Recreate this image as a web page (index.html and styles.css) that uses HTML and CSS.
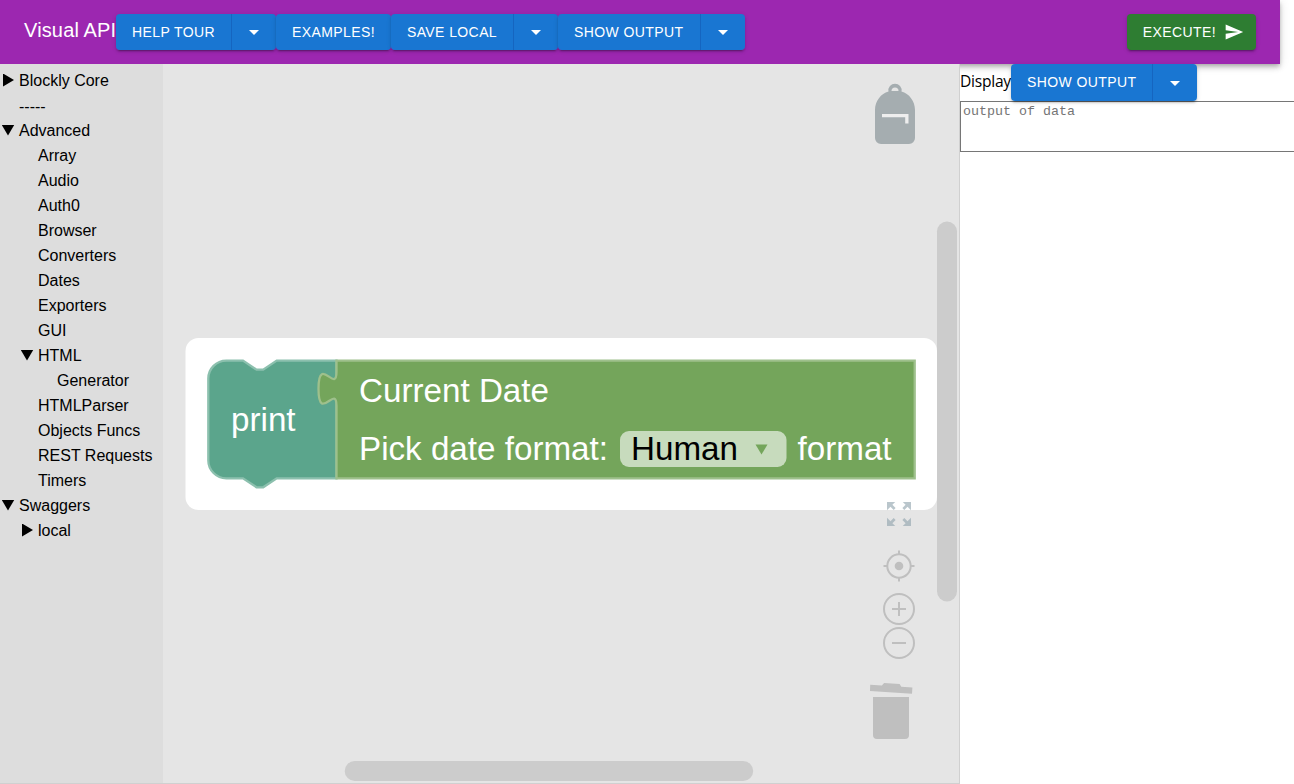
FILE: index.html
```html
<!DOCTYPE html>
<html lang="en">
<head>
<meta charset="utf-8">
<title>Visual API</title>
<link rel="stylesheet" href="styles.css">
</head>
<body>
<header class="appbar">
  <h1 class="brand">Visual API</h1>
  <div class="group">
    <button class="btn">HELP TOUR</button>
    <button class="btn caret"><svg width="24" height="24" viewBox="0 0 24 24"><path d="m7 10 5 5 5-5z"/></svg></button>
  </div>
  <div class="group"><button class="btn">EXAMPLES!</button></div>
  <div class="group">
    <button class="btn">SAVE LOCAL</button>
    <button class="btn caret"><svg width="24" height="24" viewBox="0 0 24 24"><path d="m7 10 5 5 5-5z"/></svg></button>
  </div>
  <div class="group wide">
    <button class="btn">SHOW OUTPUT</button>
    <button class="btn caret"><svg width="24" height="24" viewBox="0 0 24 24"><path d="m7 10 5 5 5-5z"/></svg></button>
  </div>
  <button class="btn execute">EXECUTE!<svg width="20" height="20" viewBox="0 0 24 24"><path d="M2.01 21 23 12 2.01 3 2 10l15 2-15 2z"/></svg></button>
</header>
<main class="main">
  <section class="blockly">
    <nav class="toolbox">
      <div class="row"><i class="arrow closed"></i>Blockly Core</div>
      <div class="row sep"><i class="arrow"></i>-----</div>
      <div class="row"><i class="arrow open"></i>Advanced</div>
      <div class="row l1"><i class="arrow"></i>Array</div>
      <div class="row l1"><i class="arrow"></i>Audio</div>
      <div class="row l1"><i class="arrow"></i>Auth0</div>
      <div class="row l1"><i class="arrow"></i>Browser</div>
      <div class="row l1"><i class="arrow"></i>Converters</div>
      <div class="row l1"><i class="arrow"></i>Dates</div>
      <div class="row l1"><i class="arrow"></i>Exporters</div>
      <div class="row l1"><i class="arrow"></i>GUI</div>
      <div class="row l1"><i class="arrow open"></i>HTML</div>
      <div class="row l2"><i class="arrow"></i>Generator</div>
      <div class="row l1"><i class="arrow"></i>HTMLParser</div>
      <div class="row l1"><i class="arrow"></i>Objects Funcs</div>
      <div class="row l1"><i class="arrow"></i>REST Requests</div>
      <div class="row l1"><i class="arrow"></i>Timers</div>
      <div class="row"><i class="arrow open"></i>Swaggers</div>
      <div class="row l1"><i class="arrow closed"></i>local</div>
    </nav>
    <svg class="workspace" width="796" height="719" viewBox="163 64 796 719">
      <rect class="hole" x="185.500" y="338" width="751.500" height="172" rx="13"/>
      <g class="block">
        <path class="print" d="M208.300 378.600a18 18 0 0 1 18-18H243l13.500 9h6.700l13.500-9H336.500V478.300H276.700l-13.500 9h-6.700l-13.500-9H226.300a18 18 0 0 1-18-18z"/>
        <path class="date" d="M336.500 360.600H914.700V478.300H336.500V405.800c0-22.600-18 18-18-17s18 5.600 18-17z"/>
        <text x="231" y="431">print</text>
        <text x="359" y="402">Current Date</text>
        <text x="359" y="460">Pick date format:</text>
        <rect class="field" x="620" y="431" width="166.500" height="36" rx="9"/>
        <text class="value" x="631" y="460">Human</text>
        <path class="tri" d="M755.500 444.500h12l-6 10z"/>
        <text x="797.500" y="460">format</text>
      </g>
      <g class="scroll">
        <rect x="937" y="221.500" width="20" height="380" rx="10"/>
        <rect x="344.700" y="761" width="408.500" height="20" rx="10"/>
      </g>
      <g class="backpack">
        <path d="M875 110c0-9 6-16.500 13.500-18.500a6.600 6.600 0 1 1 13 0C909 93.500 915 101 915 110v28a6 6 0 0 1-6 6h-28a6 6 0 0 1-6-6z"/>
        <path class="cut" d="M891.500 91a3.500 3.500 0 0 1 7 0z"/>
        <path class="zip" d="M882 114h26.500v9.500h-3.300v-6.300H882z"/>
      </g>
      <g class="fit">
        <path id="corner" d="M887 502h8.200l-2.800 2.800 3.200 3.200-1.900 1.900-3.200-3.200-3.500 3.500z"/>
        <use href="#corner" transform="matrix(-1 0 0 1 1798 0)"/>
        <use href="#corner" transform="matrix(1 0 0 -1 0 1028)"/>
        <use href="#corner" transform="matrix(-1 0 0 -1 1798 1028)"/>
      </g>
      <g class="zoom">
        <circle cx="899" cy="566" r="11.700"/>
        <circle class="dot" cx="899" cy="566" r="4.300"/>
        <path d="M899 550.500v4M899 577.500v4M883.500 566h4M910.500 566h4"/>
        <circle cx="899" cy="609" r="15"/>
        <path d="M892 609h14M899 602v14"/>
        <circle cx="899" cy="643" r="15"/>
        <path d="M892 643h14"/>
      </g>
      <path class="trash" d="M873 697h36v38a4 4 0 0 1-4 4h-28a4 4 0 0 1-4-4zM870.200 684.800l11.700.7 2.200-2.500 15.500.9 1.700 2.800 11.100.9-.4 6.200-42-2.900z"/>
    </svg>
  </section>
  <section class="output">
    <div class="display">
      <span class="label">Display</span>
      <div class="group">
        <button class="btn">SHOW OUTPUT</button>
        <button class="btn caret"><svg width="24" height="24" viewBox="0 0 24 24"><path d="m7 10 5 5 5-5z"/></svg></button>
      </div>
    </div>
    <textarea class="data" placeholder="output of data"></textarea>
  </section>
</main>
</body>
</html>
```
FILE: styles.css
```css
* { box-sizing: border-box; }
body {
  margin: 0;
  width: 100%;
  height: 784px;
  overflow: hidden;
  background: #fff;
  font-family: "Liberation Sans", Arial, sans-serif;
}
.appbar {
  display: flex;
  align-items: center;
  width: 1280px;
  height: 64px;
  padding: 0 24px;
  background: #9c27b0;
  box-shadow: 0 2px 4px -1px rgba(0,0,0,.2), 0 4px 5px rgba(0,0,0,.14), 0 1px 10px rgba(0,0,0,.12);
}
.brand {
  margin: 0;
  width: 92px;
  padding-bottom: 4px;
  color: #fff;
  font-size: 20px;
  font-weight: 400;
  line-height: 32px;
  letter-spacing: .15px;
  white-space: nowrap;
}
.group {
  display: flex;
  border-radius: 4px;
  box-shadow: 0 3px 1px -2px rgba(0,0,0,.2), 0 2px 2px rgba(0,0,0,.14), 0 1px 5px rgba(0,0,0,.12);
}
.btn {
  display: flex;
  align-items: center;
  height: 36.5px;
  padding: 0 16px;
  border: 0;
  border-radius: 4px;
  background: #1976d2;
  color: #fff;
  font: 400 14px/24.5px "Liberation Sans", Arial, sans-serif;
  letter-spacing: .4px;
  white-space: nowrap;
}
.btn svg { display: block; fill: currentColor; }
.btn:not(:last-child) {
  border-right: 1px solid #1565c0;
  border-radius: 4px 0 0 4px;
}
.caret { padding: 0 10px; border-radius: 0 4px 4px 0; }
.wide .btn:first-child { padding-right: 17px; }
.appbar .execute {
  gap: 8px;
  margin-left: auto;
  padding-right: 12px;
  background: #2e7d32;
  border-radius: 4px;
  box-shadow: 0 3px 1px -2px rgba(0,0,0,.2), 0 2px 2px rgba(0,0,0,.14), 0 1px 5px rgba(0,0,0,.12);
}
.main { display: flex; height: 720px; }
.blockly {
  position: relative;
  display: flex;
  flex: none;
  width: 960px;
  border-right: 1px solid #d0d0d0;
  border-bottom: 1px solid #d0d0d0;
  background: #e5e5e5;
}
.toolbox {
  width: 163px;
  padding-top: 4px;
  background: #ddd;
  color: #000;
  font-size: 16px;
}
.row {
  display: flex;
  align-items: center;
  height: 25px;
  line-height: 25px;
  white-space: nowrap;
}
.sep { padding-top: 2px; }
.l1 { padding-left: 19px; }
.l2 { padding-left: 38px; }
.arrow { flex: none; width: 19px; height: 12px; }
.arrow::before { content: ""; display: block; }
.closed::before {
  width: 11px;
  height: 13px;
  margin: -1px 0 0 3px;
  background: #000;
  clip-path: polygon(0 0, 100% 50%, 0 100%);
}
.open::before {
  width: 13px;
  height: 11px;
  margin: 0 0 0 1.5px;
  background: #000;
  clip-path: polygon(0 0, 100% 0, 50% 100%);
}
.workspace { display: block; }
.hole { fill: #fff; }
.block path { stroke-width: 2.3; }
.block .print { fill: #5ba58c; stroke: #8cc0ae; }
.block .date { fill: #74a55b; stroke: #9ec08c; }
.block text { fill: #fff; font-size: 33.2px; }
.block .value { fill: #000; }
.block .field { fill: #c7dbbd; }
.block .tri { fill: #74a55b; stroke: none; }
.scroll rect { fill: #ccc; }
.backpack { fill: #a5adb0; }
.backpack .cut { fill: #e5e5e5; }
.backpack .zip { fill: #eee; }
.fit { fill: #90a4ae; opacity: .62; }
.zoom { fill: none; stroke: #bfbfbf; stroke-width: 2; }
.zoom .dot { fill: #bfbfbf; stroke: none; }
.trash { fill: #bfbfbf; }
.output { flex: 1; min-width: 0; overflow-x: clip; }
.display { display: flex; align-items: center; height: 37px; }
.label {
  width: 51px;
  padding-bottom: 3px;
  font: 400 15.6px/24px "Open Sans", "Noto Sans", sans-serif;
  letter-spacing: -.25px;
}
.display .group { position: relative; }
.data {
  display: block;
  width: 100%;
  height: 51px;
  padding: 2px;
  border: 1px solid #767676;
  border-right: 0;
  border-radius: 0;
  background: #fff;
  font: 13.333px "Liberation Mono", monospace;
  resize: none;
}
.data::placeholder { color: #757575; }
```
